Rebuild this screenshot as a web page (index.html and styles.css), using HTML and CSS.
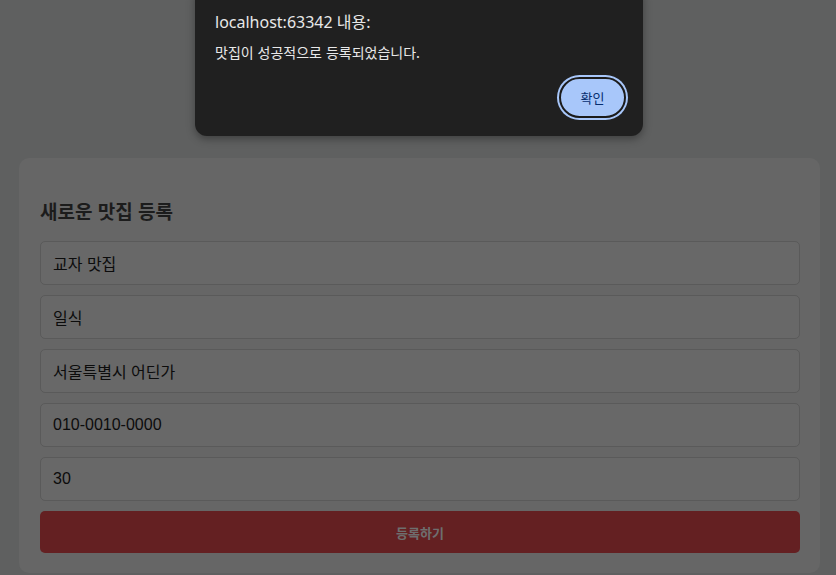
FILE: index.html
```html
<!DOCTYPE html>
<html lang="ko">
<head>
  <meta charset="UTF-8">
  <meta name="viewport" content="width=device-width, initial-scale=1.0">
  <title>맛집 등록</title>
  <link rel="stylesheet" href="styles.css">
</head>
<body>
  <div class="alert">
    <div class="alert-title">localhost:63342 내용:</div>
    <div class="alert-msg">맛집이 성공적으로 등록되었습니다.</div>
    <div class="alert-actions">
      <button class="alert-ok">확인</button>
    </div>
  </div>

  <form class="card">
    <h2>새로운 맛집 등록</h2>
    <input type="text" value="교자 맛집">
    <input type="text" value="일식">
    <input type="text" value="서울특별시 어딘가">
    <input type="text" value="010-0010-0000">
    <input type="text" value="30">
    <button type="button" class="submit">등록하기</button>
  </form>
</body>
</html>
```

FILE: styles.css
```css
* {
  box-sizing: border-box;
  margin: 0;
  padding: 0;
}

body {
  min-height: 100vh;
  background-color: #5f6060;
  font-family: "Liberation Sans", "Noto Sans CJK KR", sans-serif;
  padding-top: 158px;
}

.card {
  width: 801px;
  margin-left: 19px;
  padding: 21px 20px 20px 21px;
  background-color: #666;
  border-radius: 10px;
  display: flex;
  flex-direction: column;
  gap: 10px;
}

.card h2 {
  font-family: "Noto Sans CJK KR", sans-serif;
  font-size: 19px;
  font-weight: 700;
  color: #1c1c1c;
  line-height: 26px;
  margin: 19px 0 7px;
}

.card input {
  height: 44px;
  padding: 0 12px;
  border: 1px solid #5a5a5a;
  border-radius: 5px;
  background-color: #686868;
  color: #0c0c0c;
  font-family: "Liberation Sans", "Noto Sans CJK KR", sans-serif;
  font-size: 16px;
  outline: none;
}

.submit {
  height: 42px;
  border: none;
  border-radius: 5px;
  background-color: #642022;
  color: #6e6e6e;
  font-family: "Noto Sans CJK KR", sans-serif;
  font-size: 13px;
  font-weight: 700;
}

.alert {
  position: absolute;
  top: -14px;
  left: 195px;
  width: 448px;
  height: 150px;
  padding: 25px 20px 0;
  background-color: #202020;
  border-radius: 12px;
  box-shadow: 0 3px 8px rgba(0, 0, 0, .35);
  color: #e8e8e8;
  font-family: "Noto Sans", "Noto Sans CJK KR", sans-serif;
}

.alert-title {
  font-size: 16px;
  line-height: 22px;
}

.alert-msg {
  margin-top: 10px;
  font-family: "Noto Sans CJK KR", sans-serif;
  font-size: 14px;
  line-height: 19px;
}

.alert-actions {
  display: flex;
  justify-content: flex-end;
  margin-top: 15px;
  margin-right: -3px;
}

.alert-ok {
  width: 67px;
  height: 41px;
  border: 2px solid #1b1b1b;
  border-radius: 21px;
  background-color: #a8c7fa;
  box-shadow: 0 0 0 2px #a8c7fa;
  color: #062e6f;
  font-family: "Noto Sans CJK KR", sans-serif;
  font-size: 13px;
}
```
